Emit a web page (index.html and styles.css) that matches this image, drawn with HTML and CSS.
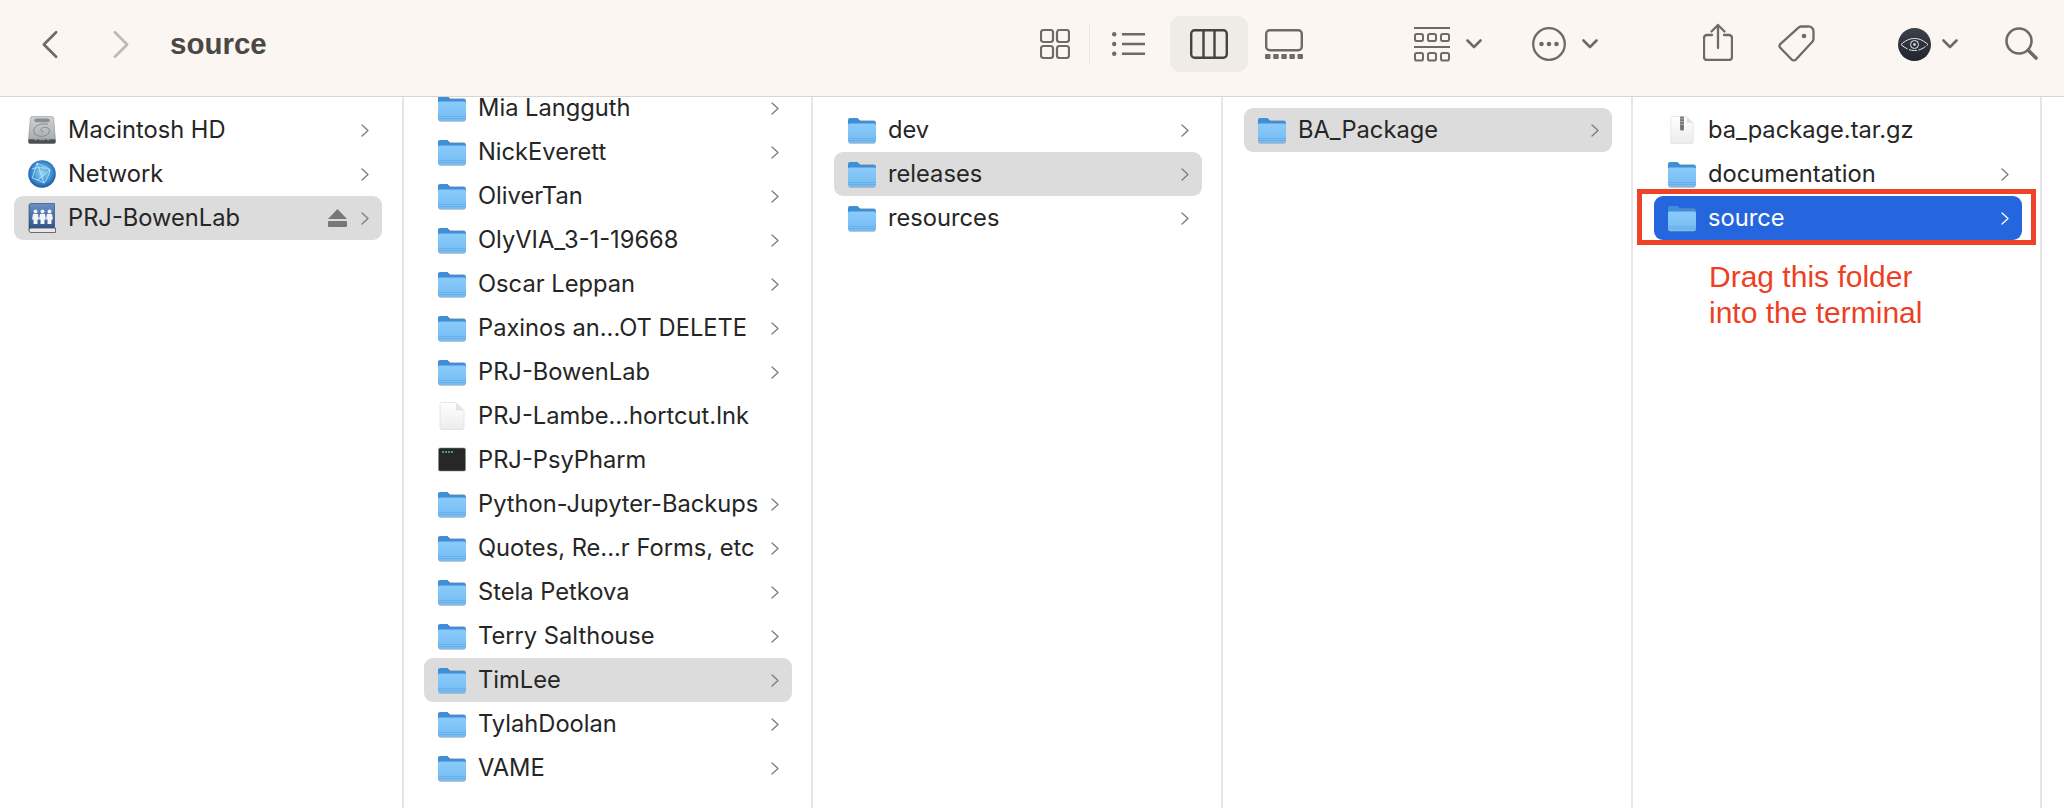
FILE: index.html
```html
<!DOCTYPE html>
<html>
<head>
  <title>source</title>
  <link rel="stylesheet" href="styles.css">
</head>
<body>
  <svg class="sprite" aria-hidden="true">
    <defs>
      <linearGradient id="folderBody" x1="0" y1="0" x2="0" y2="1">
        <stop offset="0" stop-color="#8acbfa"/>
        <stop offset="1" stop-color="#74bbf3"/>
      </linearGradient>
      <linearGradient id="diskBody" x1="0" y1="0" x2="0" y2="1">
        <stop offset="0" stop-color="#d0d3d4"/>
        <stop offset="1" stop-color="#a3a7a9"/>
      </linearGradient>
      <radialGradient id="globeBody" cx="0.5" cy="0.45" r="0.6">
        <stop offset="0" stop-color="#8fd8f2"/>
        <stop offset="0.6" stop-color="#3a8fd4"/>
        <stop offset="1" stop-color="#17478e"/>
      </radialGradient>
      <linearGradient id="bookBody" x1="0" y1="0" x2="0" y2="1">
        <stop offset="0" stop-color="#6a90c6"/>
        <stop offset="1" stop-color="#2c4f88"/>
      </linearGradient>
      <linearGradient id="eyeBody" x1="0" y1="0" x2="0" y2="1">
        <stop offset="0" stop-color="#3c414b"/>
        <stop offset="1" stop-color="#22252c"/>
      </linearGradient>
      <linearGradient id="paper" x1="0" y1="0" x2="0" y2="1">
        <stop offset="0" stop-color="#ffffff"/>
        <stop offset="1" stop-color="#ececec"/>
      </linearGradient>
      <symbol id="folder" viewBox="0 0 28 27">
        <rect x="0.5" y="3" width="27" height="24" rx="2" fill="#8a8f94" opacity="0.5"/>
        <path d="M0 3a2 2 0 0 1 2-2h7.500l3 3H26a2 2 0 0 1 2 2v8H0z" fill="#3f8fd8"/>
        <path d="M0 8a1.500 1.500 0 0 1 1.500-1.500h25A1.500 1.500 0 0 1 28 8v16a2 2 0 0 1-2 2H2a2 2 0 0 1-2-2z" fill="url(#folderBody)"/>
        <path d="M0 21.500h28M0 23.500h28" stroke="#62aae6" stroke-width="0.700"/>
      </symbol>
      <symbol id="chev" viewBox="0 0 8 13">
        <path d="M1 1l6 5.500-6 5.500" fill="none" stroke="currentColor" stroke-width="1.300" stroke-linecap="round" stroke-linejoin="round"/>
      </symbol>
      <symbol id="down" viewBox="0 0 16 10">
        <path d="M1.500 1.500L8 8l6.500-6.500" fill="none" stroke="currentColor" stroke-width="2.600" stroke-linecap="round" stroke-linejoin="round"/>
      </symbol>
    </defs>
  </svg>

  <header class="toolbar">
    <svg class="nav-back" viewBox="0 0 18 30"><path d="M16 2L3 15l13 13" fill="none" stroke="currentColor" stroke-width="2.800" stroke-linecap="round" stroke-linejoin="round"/></svg>
    <svg class="nav-fwd" viewBox="0 0 18 30"><path d="M2 2l13 13L2 28" fill="none" stroke="currentColor" stroke-width="2.800" stroke-linecap="round" stroke-linejoin="round"/></svg>
    <h1 class="title">source</h1>

    <svg class="tool view-icons" viewBox="0 0 30 30"><g fill="none" stroke="currentColor" stroke-width="2.200"><rect x="1" y="1" width="12" height="12" rx="2.500"/><rect x="17" y="1" width="12" height="12" rx="2.500"/><rect x="1" y="17" width="12" height="12" rx="2.500"/><rect x="17" y="17" width="12" height="12" rx="2.500"/></g></svg>
    <span class="tool-sep"></span>
    <svg class="tool view-list" viewBox="0 0 33 24"><g fill="currentColor"><circle cx="2.200" cy="2.200" r="2.200"/><circle cx="2.200" cy="12" r="2.200"/><circle cx="2.200" cy="21.800" r="2.200"/></g><path d="M10 2.200h23M10 12h23M10 21.800h23" stroke="currentColor" stroke-width="2.400"/></svg>
    <span class="view-current">
      <svg class="view-columns" viewBox="0 0 38 30"><g fill="none" stroke="currentColor" stroke-width="2.400"><rect x="1.200" y="1.200" width="35.600" height="27.600" rx="3.500"/><path d="M13.500 1.200v27.600M24.500 1.200v27.600"/></g></svg>
    </span>
    <svg class="tool view-gallery" viewBox="0 0 38 30"><rect x="1.200" y="1.200" width="35.600" height="20" rx="3.500" fill="none" stroke="currentColor" stroke-width="2.400"/><g fill="currentColor"><rect x="0" y="25" width="5.500" height="5" rx="0.800"/><rect x="8.200" y="25" width="5.500" height="5" rx="0.800"/><rect x="16.300" y="25" width="5.500" height="5" rx="0.800"/><rect x="24.400" y="25" width="5.500" height="5" rx="0.800"/><rect x="32.500" y="25" width="5.500" height="5" rx="0.800"/></g></svg>

    <svg class="tool group-by" viewBox="0 0 36 35"><path d="M0 1h36M0 20h36" stroke="currentColor" stroke-width="2.200"/><g fill="none" stroke="currentColor" stroke-width="2"><rect x="1" y="7" width="8" height="7" rx="1.800"/><rect x="14" y="7" width="8" height="7" rx="1.800"/><rect x="27" y="7" width="8" height="7" rx="1.800"/><rect x="1" y="26" width="8" height="7.500" rx="1.800"/><rect x="14" y="26" width="8" height="7.500" rx="1.800"/><rect x="27" y="26" width="8" height="7.500" rx="1.800"/></g></svg>
    <svg class="tool-down"><use href="#down"/></svg>

    <svg class="tool action" viewBox="0 0 34 34"><circle cx="17" cy="17" r="15.800" fill="none" stroke="currentColor" stroke-width="2.300"/><g fill="currentColor"><circle cx="9.500" cy="17" r="2.300"/><circle cx="17" cy="17" r="2.300"/><circle cx="24.500" cy="17" r="2.300"/></g></svg>
    <svg class="tool-down"><use href="#down"/></svg>

    <svg class="tool share" viewBox="0 0 30 38"><g fill="none" stroke="currentColor" stroke-width="2.300" stroke-linecap="round" stroke-linejoin="round"><path d="M9 12H4a3 3 0 0 0-3 3v19a3 3 0 0 0 3 3h22a3 3 0 0 0 3-3V15a3 3 0 0 0-3-3h-5"/><path d="M15 25V2M8.500 8.500L15 2l6.500 6.500"/></g></svg>
    <svg class="tool tag" viewBox="0 0 37 38"><path d="M23 1.500h7a5 5 0 0 1 5.500 5.500v7a4 4 0 0 1-1.200 2.800L18 34.500a3 3 0 0 1-4.300 0L2.500 23a3 3 0 0 1 0-4.200L20.500 2.600A4 4 0 0 1 23 1.500z" fill="none" stroke="currentColor" stroke-width="2.300" stroke-linejoin="round"/><circle cx="26" cy="11" r="2.300" fill="currentColor"/></svg>

    <svg class="eye" viewBox="0 0 33 33"><circle cx="16.500" cy="16.500" r="16.500" fill="url(#eyeBody)"/><g fill="none" stroke="#e8e9ea" stroke-width="1"><path d="M3 16.500c4-3.500 8-6 13.500-6s9.500 2.500 13.500 6"/><path d="M3 16.500c4 3.500 8 6 13.500 6s9.500-2.500 13.500-6" stroke-dasharray="8 1.500"/><circle cx="16.500" cy="16.500" r="4"/></g><circle cx="16.500" cy="16.500" r="1.300" fill="#e8e9ea"/></svg>
    <svg class="tool-down eye-down"><use href="#down"/></svg>

    <svg class="tool search" viewBox="0 0 33 34"><g fill="none" stroke="currentColor" stroke-linecap="round"><circle cx="14" cy="14" r="12.500" stroke-width="2.600"/><path d="M23.500 23.500L31 31" stroke-width="3.600"/></g></svg>
  </header>

  <main class="browser">
    <section class="pane pane-sidebar">
      <ul class="rows">
        <li class="row">
          <svg class="file-icon" viewBox="0 0 28 29"><path d="M4 0.500h20a2 2 0 0 1 2 1.800L28 25v2a1.500 1.500 0 0 1-1.500 1.500h-25A1.500 1.500 0 0 1 0 27v-2L2 2.300A2 2 0 0 1 4 0.500z" fill="url(#diskBody)" stroke="#7a7e81" stroke-width="0.500"/><rect x="0" y="24" width="28" height="4.500" rx="1.500" fill="#4b4f52"/><path d="M6 24h3M11 24h6M19 24h3" stroke="#9a9ea1" stroke-width="2"/><path d="M8 2.500h12a2 2 0 0 1 0 4H8a2 2 0 0 1 0-4z" fill="#8a8e91"/><path d="M20 8.500C13 7 6 10 5.500 15c-.5 4 4 6.500 9 6 5-.5 8-3.500 7-7-1-2.500-6-3-8-1-1.500 1.500 0 3.500 2 3.500" fill="none" stroke="#7b8083" stroke-width="0.900"/></svg>
          <span class="name">Macintosh HD</span>
          <svg class="chev"><use href="#chev"/></svg>
        </li>
        <li class="row">
          <svg class="file-icon" viewBox="0 0 28 28"><circle cx="14" cy="14" r="13.800" fill="url(#globeBody)"/><g fill="none" stroke="#d8f3fb" stroke-width="0.800" opacity="0.850"><path d="M9 3c-2 6-3 11-5 15M4 9c5-2 12-2 18 1M9 3c5 3 11 4 13 7-1 5-3 9-6 13M4 18c4 1 8 3 12 5M22 10L9.500 20M9 3l7 20"/></g></svg>
          <span class="name">Network</span>
          <svg class="chev"><use href="#chev"/></svg>
        </li>
        <li class="row is-open">
          <svg class="file-icon book" viewBox="0 0 28 31"><path d="M2.500 0.500h24v25h-24A2 2 0 0 0 1 27V2.500A2 2 0 0 1 2.500 0.500z" fill="url(#bookBody)" stroke="#22406e" stroke-width="0.600"/><path d="M1 27a2 2 0 0 1 2-2h24.500v4.500H3a2 2 0 0 1-2-2z" fill="#e6e8ea" stroke="#4a4d52" stroke-width="0.800"/><g fill="#f2f4f7"><circle cx="7.500" cy="8.500" r="2"/><circle cx="14.500" cy="8.500" r="2"/><circle cx="21.500" cy="8.500" r="2"/><path d="M5 11h5l1 5.500H9.500V21h-4v-4.500H4zM12 11h5l1 5.500h-1.500V21h-4v-4.500H11zM19 11h5l1 5.500h-1.500V21h-4v-4.500H18z"/></g></svg>
          <span class="name">PRJ-BowenLab</span>
          <svg class="eject" viewBox="0 0 19 18"><path d="M9.500 0l9.500 10H0z" fill="#77777a"/><rect y="12" width="19" height="6" rx="1" fill="#77777a"/></svg>
          <svg class="chev"><use href="#chev"/></svg>
        </li>
      </ul>
    </section>

    <section class="pane pane-scrolled">
      <ul class="rows">
        <li class="row"><svg class="file-icon folder"><use href="#folder"/></svg><span class="name">Mia Langguth</span><svg class="chev"><use href="#chev"/></svg></li>
        <li class="row"><svg class="file-icon folder"><use href="#folder"/></svg><span class="name">NickEverett</span><svg class="chev"><use href="#chev"/></svg></li>
        <li class="row"><svg class="file-icon folder"><use href="#folder"/></svg><span class="name">OliverTan</span><svg class="chev"><use href="#chev"/></svg></li>
        <li class="row"><svg class="file-icon folder"><use href="#folder"/></svg><span class="name">OlyVIA_3-1-19668</span><svg class="chev"><use href="#chev"/></svg></li>
        <li class="row"><svg class="file-icon folder"><use href="#folder"/></svg><span class="name">Oscar Leppan</span><svg class="chev"><use href="#chev"/></svg></li>
        <li class="row"><svg class="file-icon folder"><use href="#folder"/></svg><span class="name">Paxinos an...OT DELETE</span><svg class="chev"><use href="#chev"/></svg></li>
        <li class="row"><svg class="file-icon folder"><use href="#folder"/></svg><span class="name">PRJ-BowenLab</span><svg class="chev"><use href="#chev"/></svg></li>
        <li class="row">
          <svg class="file-icon" viewBox="0 0 28 28"><path d="M3 0.500h15l8 8V26a1.500 1.500 0 0 1-1.500 1.500h-21A1.500 1.500 0 0 1 2 26V1.500A1 1 0 0 1 3 0.500z" fill="url(#paper)" stroke="#dcdcdc" stroke-width="0.700"/><path d="M18 0.500l8 8h-8z" fill="#e4e4e4"/></svg>
          <span class="name">PRJ-Lambe...hortcut.lnk</span>
        </li>
        <li class="row">
          <svg class="file-icon" viewBox="0 0 28 28"><rect x="0.500" y="2" width="27" height="23" rx="1.500" fill="#262726" stroke="#8c8c8c" stroke-width="0.600"/><path d="M4 6h2M7 6h2M10 6h2M13 6h2" stroke="#5fc46a" stroke-width="1.300"/></svg>
          <span class="name">PRJ-PsyPharm</span>
        </li>
        <li class="row"><svg class="file-icon folder"><use href="#folder"/></svg><span class="name">Python-Jupyter-Backups</span><svg class="chev"><use href="#chev"/></svg></li>
        <li class="row"><svg class="file-icon folder"><use href="#folder"/></svg><span class="name">Quotes, Re...r Forms, etc</span><svg class="chev"><use href="#chev"/></svg></li>
        <li class="row"><svg class="file-icon folder"><use href="#folder"/></svg><span class="name">Stela Petkova</span><svg class="chev"><use href="#chev"/></svg></li>
        <li class="row"><svg class="file-icon folder"><use href="#folder"/></svg><span class="name">Terry Salthouse</span><svg class="chev"><use href="#chev"/></svg></li>
        <li class="row is-open"><svg class="file-icon folder"><use href="#folder"/></svg><span class="name">TimLee</span><svg class="chev"><use href="#chev"/></svg></li>
        <li class="row"><svg class="file-icon folder"><use href="#folder"/></svg><span class="name">TylahDoolan</span><svg class="chev"><use href="#chev"/></svg></li>
        <li class="row"><svg class="file-icon folder"><use href="#folder"/></svg><span class="name">VAME</span><svg class="chev"><use href="#chev"/></svg></li>
      </ul>
    </section>

    <section class="pane">
      <ul class="rows">
        <li class="row"><svg class="file-icon folder"><use href="#folder"/></svg><span class="name">dev</span><svg class="chev"><use href="#chev"/></svg></li>
        <li class="row is-open"><svg class="file-icon folder"><use href="#folder"/></svg><span class="name">releases</span><svg class="chev"><use href="#chev"/></svg></li>
        <li class="row"><svg class="file-icon folder"><use href="#folder"/></svg><span class="name">resources</span><svg class="chev"><use href="#chev"/></svg></li>
      </ul>
    </section>

    <section class="pane">
      <ul class="rows">
        <li class="row is-open"><svg class="file-icon folder"><use href="#folder"/></svg><span class="name">BA_Package</span><svg class="chev"><use href="#chev"/></svg></li>
      </ul>
    </section>

    <section class="pane pane-last">
      <ul class="rows">
        <li class="row">
          <svg class="file-icon" viewBox="0 0 28 30"><path d="M3 0.500h16l7 7V28a1.500 1.500 0 0 1-1.500 1.500h-21A1.500 1.500 0 0 1 2 28V1.500A1 1 0 0 1 3 0.500z" fill="url(#paper)" stroke="#dcdcdc" stroke-width="0.700"/><path d="M19 0.500l7 7h-7z" fill="#e4e4e4"/><rect x="12" y="0.500" width="4" height="15" rx="1" fill="#6e7073"/><path d="M12.500 3h3M12.500 6h3M12.500 9h3" stroke="#d5d5d5" stroke-width="0.800"/></svg>
          <span class="name">ba_package.tar.gz</span>
        </li>
        <li class="row"><svg class="file-icon folder"><use href="#folder"/></svg><span class="name">documentation</span><svg class="chev"><use href="#chev"/></svg></li>
        <li class="row is-selected"><svg class="file-icon folder"><use href="#folder"/></svg><span class="name">source</span><svg class="chev"><use href="#chev"/></svg></li>
      </ul>
      <div class="callout-box"></div>
      <p class="callout-text">Drag this folder<br>into the terminal</p>
    </section>

    <div class="pane-end"></div>
  </main>
</body>
</html>
```

FILE: styles.css
```css
* {
  box-sizing: border-box;
}
html,
body {
  margin: 0;
  height: 100%;
  overflow: hidden;
}
body {
  display: flex;
  flex-direction: column;
  font-family: Inter, "Noto Sans", sans-serif;
  background-color: #fff;
  color: #262626;
}
.sprite {
  position: absolute;
  width: 0;
  height: 0;
}

/* toolbar */
.toolbar {
  display: flex;
  align-items: center;
  flex: 0 0 97px;
  padding: 0 0 8px 41px;
  background-color: #fbf6f2;
  border-bottom: 1px solid #d8d6d4;
  color: #6f6a64;
}
.toolbar svg {
  flex: none;
}
.nav-back {
  width: 17px;
  height: 29px;
}
.nav-fwd {
  width: 17px;
  height: 29px;
  margin-left: 55px;
  color: #bdb9b4;
}
.title {
  width: 140px;
  margin: 0 0 0 40px;
  font-size: 29.500px;
  font-weight: 600;
  color: #4b4844;
  font-family: "Liberation Sans", Arial, sans-serif;
}
.view-icons {
  width: 30px;
  height: 30px;
  margin-left: 730px;
}
.tool-sep {
  width: 1px;
  height: 40px;
  margin: 0 22px 0 19px;
  background-color: #ece7e3;
}
.view-list {
  width: 33px;
  height: 24px;
}
.view-current {
  display: flex;
  align-items: center;
  justify-content: center;
  width: 78px;
  height: 56px;
  margin-left: 25px;
  background-color: #efebe7;
  border-radius: 11px;
  color: #45423f;
}
.view-columns {
  width: 38px;
  height: 30px;
}
.view-gallery {
  width: 38px;
  height: 30px;
  margin-left: 17px;
}
.group-by {
  width: 36px;
  height: 35px;
  margin-left: 111px;
}
.tool-down {
  width: 16px;
  height: 10px;
  margin-left: 16px;
}
.action {
  width: 34px;
  height: 34px;
  margin-left: 50px;
}
.share {
  width: 30px;
  height: 38px;
  margin-left: 105px;
  margin-top: -4px;
}
.tag {
  width: 37px;
  height: 38px;
  margin-left: 45px;
  margin-top: -1px;
}
.eye {
  width: 33px;
  height: 33px;
  margin-left: 83px;
}
.eye-down {
  margin-left: 11px;
}
.search {
  width: 33px;
  height: 34px;
  margin-left: 47px;
  margin-top: -1px;
}

/* columns */
.browser {
  display: flex;
  flex: 1;
  min-height: 0;
}
.pane {
  flex: 0 0 410px;
  position: relative;
  padding: 11px 19px 0 21px;
  border-right: 2px solid #e6e6e6;
  overflow: hidden;
}
.pane-sidebar {
  flex-basis: 404px;
  padding-left: 14px;
  padding-right: 20px;
}
.pane-scrolled {
  flex-basis: 409px;
  padding-left: 20px;
  padding-top: 0;
}
.pane-scrolled .rows {
  margin-top: -11px;
}
.pane-last {
  flex-basis: 409px;
  padding-right: 18px;
}
.pane-end {
  flex: 1;
}
.rows {
  list-style: none;
  margin: 0;
  padding: 0;
}
.row {
  display: flex;
  align-items: center;
  height: 44px;
  padding: 0 13px 0 14px;
  border-radius: 9px;
  font-size: 23.700px;
}
.row.is-open {
  background-color: #dcdcdc;
}
.row.is-selected {
  background-color: #2566de;
  color: #fff;
}
.row.is-selected .chev {
  color: #fff;
}
.file-icon {
  flex: none;
  width: 28px;
  height: 28px;
  margin-right: 12px;
}
.folder {
  height: 27px;
}
.book {
  height: 31px;
}
.name {
  flex: 1;
  white-space: nowrap;
  overflow: hidden;
  padding-bottom: 1px;
}
.chev {
  flex: none;
  width: 8px;
  height: 13px;
  color: #7c7c7c;
}
.eject {
  flex: none;
  width: 19px;
  height: 18px;
  margin-right: 14px;
}

/* annotation drawn on top of the last column */
.callout-box {
  position: absolute;
  left: 4px;
  top: 92px;
  width: 399px;
  height: 56px;
  border: 5px solid #ee4229;
}
.callout-text {
  position: absolute;
  left: 76px;
  top: 162px;
  margin: 0;
  font-family: "Liberation Sans", Arial, sans-serif;
  font-size: 30px;
  line-height: 36px;
  color: #ee3f24;
}
```
